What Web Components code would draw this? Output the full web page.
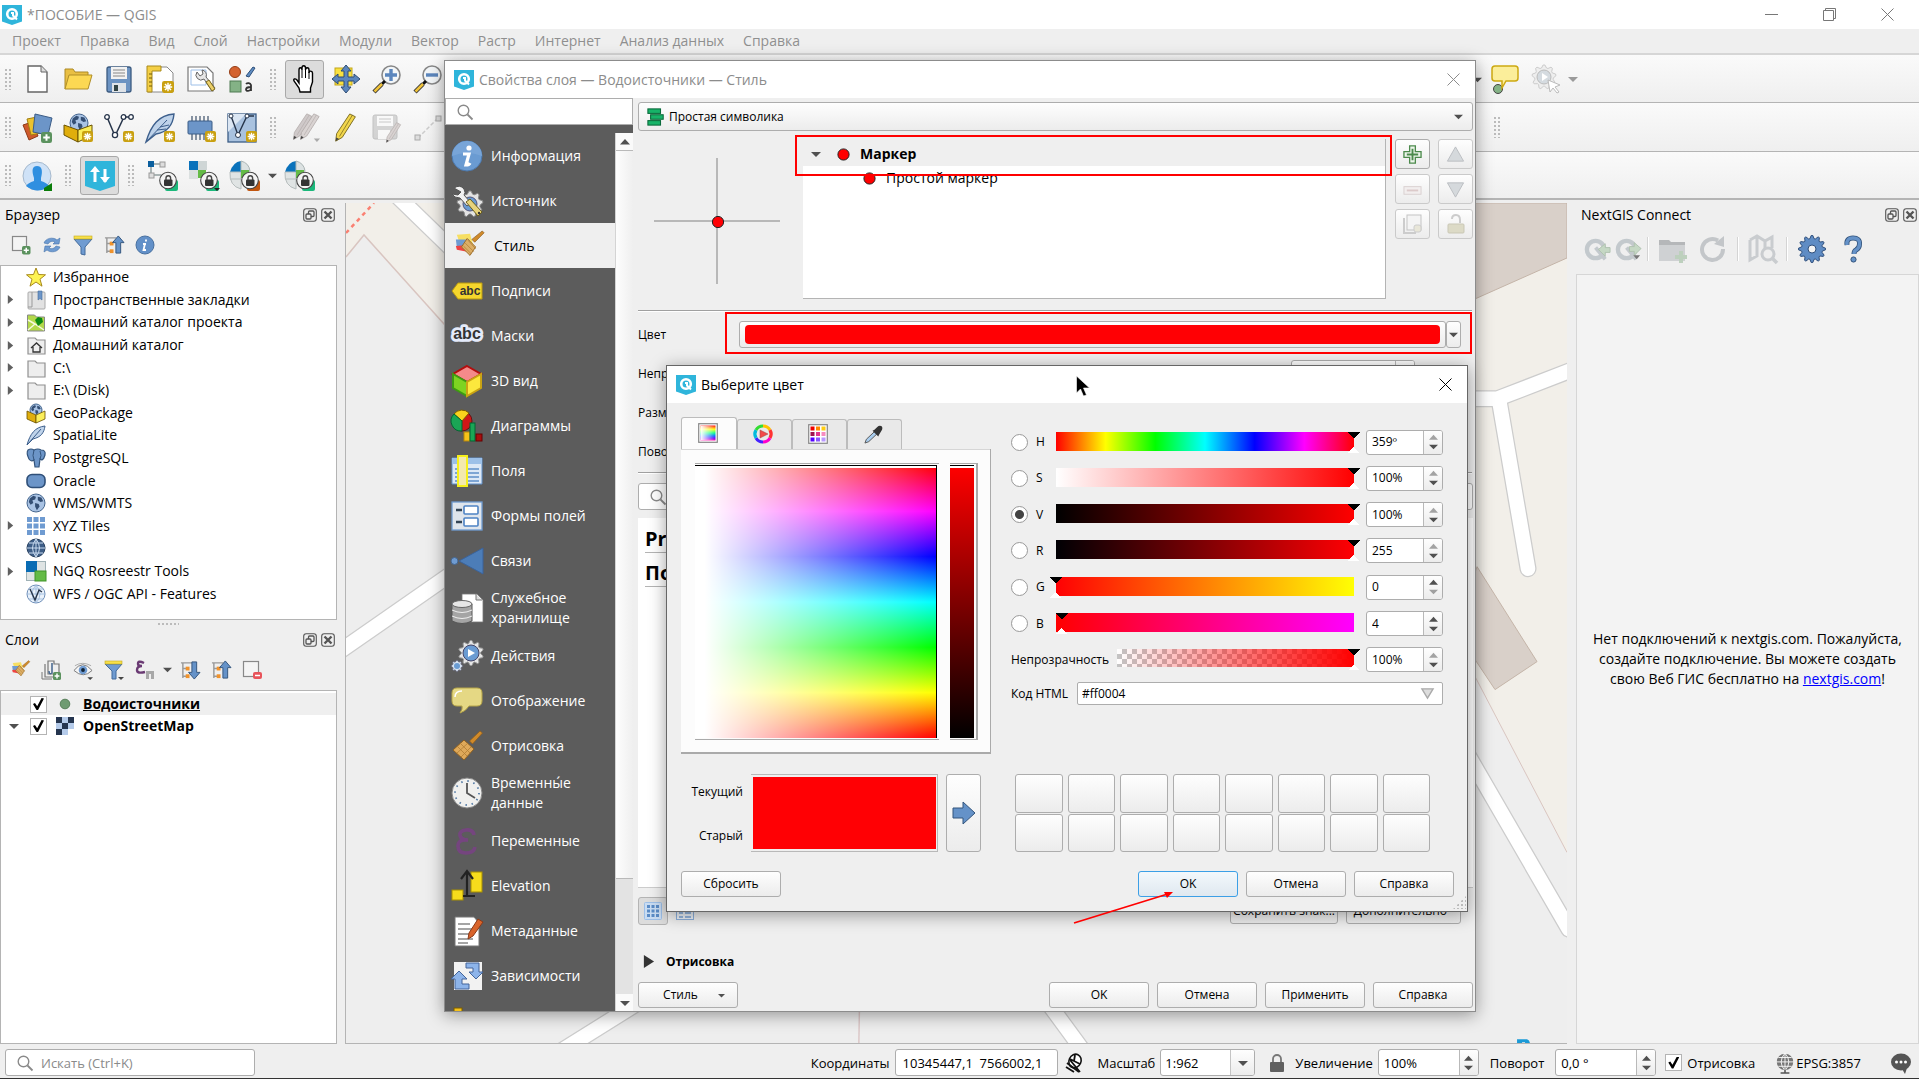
<!DOCTYPE html>
<html lang="ru">
<head>
<meta charset="utf-8">
<title>*ПОСОБИЕ — QGIS</title>
<style>
html,body{margin:0;height:100%;overflow:hidden}
body{font-family:"Open Sans","Noto Sans",sans-serif;font-size:14px;line-height:20px;color:#000;background:#efefef;
--line:#b4b4b4;--face:#efefef;--dim:#8c8c8c;--small:12px;--btn:linear-gradient(#fefefe,#ececec)}
</style>
</head>
<body>
<gis-app></gis-app>
<script>
const badge=(x,y,s=9)=>`<g transform="translate(${x} ${y}) scale(${s/10})"><rect width="10" height="10" rx="1.8" fill="#c9a010"/><path d="M5 1.5v7M1.5 5h7M2.5 2.5l5 5M7.500 2.500l-5 5" stroke="#fff" stroke-width="1.2"/></g>`;
const plusBadge=(x,y,s=9)=>`<g transform="translate(${x} ${y}) scale(${s/10})"><rect width="10" height="10" rx="2" fill="#5b925e"/><path d="M5 2v6M2 5h6" stroke="#fff" stroke-width="1.8"/></g>`;
const lockBadge=(c)=>`<rect x="17" y="19" width="13" height="11" rx="2" fill="${c}"/><circle cx="20" cy="19.500" r="8.300" fill="#f4f4f4" stroke="#444" stroke-width="1.100"/><rect x="16" y="18.500" width="8.500" height="6.500" rx="1" fill="#333"/><path d="M18 19v-2a2.300 2.300 0 0 1 4.600 0v2" fill="none" stroke="#444" stroke-width="1.400"/>`;
const globe=(cx,cy,r)=>`<circle cx="${cx}" cy="${cy}" r="${r}" fill="#a9c3e4" stroke="#44658e"/><path transform="translate(${cx-r} ${cy-r}) scale(${r/10})" d="M3 5l4-3 3 1-1 3-3 1 1 3-3 2-2-3zM12 3l4 1 2 4-3 1-3-2zM9 10l4 1 1 3-3 4-2-4z" fill="#344f74"/>`;
const gearD=(cx,cy,r,n)=>{let d='';for(let i=0;i<n*2;i++){const q=i%2?r*.78:r;for(const s of[-.22,.22]){const a=(i+s)*Math.PI/n;d+=(d?'L':'M')+(cx+q*Math.sin(a)).toFixed(1)+' '+(cy-q*Math.cos(a)).toFixed(1)}}return d+'z'};
const brush=`<path d="M3 5l14-1 4 14-13 2z" fill="#f7df63"/><path d="M2 10l14 0 2 6-15 2z" fill="#6f9bd1"/><path d="M2 17l12-1 4 8-15-3z" fill="#ef4343"/><path d="M30 1l2 2-10 10-3-3z" fill="#d08a2a" stroke="#8a5a1c" stroke-width=".7"/><path d="M14 9l9 9-6 9-9-9z" fill="#dcae66" stroke="#9a6b26"/><path d="M12 14l9 9M15 11l8 9M10 17l8 8" stroke="#b17e33" stroke-width=".8"/>`;
const tree=(c)=>`<path d="M1 3h12M3 3v16M3 9h5M3 17h5" stroke="#999" stroke-width="1.500" fill="none"/><rect x="6" y="7" width="4" height="4" fill="#f0922b"/><rect x="6" y="15" width="4" height="4" fill="#f0922b"/>${c}`;
const up='<path d="M15 1l6 7h-3.500v11h-5V8H9z" fill="#6592c8" stroke="#33547c"/>';
const down='<path d="M15 20l6-7h-3.500V2h-5v11H9z" fill="#6592c8" stroke="#33547c"/>';
const pencil=(a,b)=>`<path d="M20 1l6 3-14 22-7 4 1-8z" fill="${a}" stroke="${b}"/><path d="M23 2L9 25" stroke="${b}" stroke-width=".8"/><path d="M5 30l.5-4 3 1.500z" fill="#444"/>`;
const folder='<path d="M2 3h7l2 2h8v14H2z" fill="#eee" stroke="#909090" stroke-width="1.200"/>';
const ICONS={
logo:[20,'<path d="M0 0h20v16.500L10 20 0 16.500z" fill="#2fb5db"/><circle cx="10" cy="9" r="4.800" fill="none" stroke="#fff" stroke-width="2.600"/><path d="M9 8l2 0v2.500l4 4" stroke="#fff" stroke-width="2" fill="none"/>'],
page:[30,'<path d="M6 2h13l6 6v20H6z" fill="#fff" stroke="#666" stroke-width="1.400"/><path d="M19 2v6h6" fill="#ddd" stroke="#666"/>'],
folder:[30,'<path d="M2 25V5h8l2 3h13v5" fill="#e9bf43" stroke="#ad8a26"/><path d="M2 25L6 11h23l-4 14z" fill="#fcd853" stroke="#b08e28"/>'],
save:[30,'<rect x="3" y="3" width="24" height="25" rx="2" fill="#6c93c2" stroke="#3c5b80" stroke-width="1.300"/><rect x="7" y="3" width="16" height="12" fill="#f2f2f2"/><path d="M9 6h12M9 9h12M9 12h12" stroke="#888"/><rect x="8" y="19" width="14" height="9" fill="#dfe3e8"/><rect x="10" y="21" width="4" height="6" fill="#344"/>'],
layout:[30,'<path d="M3 3h19l6 6v19H3z" fill="#fff" stroke="#888"/><path d="M2 2h14v5H7v21H2z" fill="#f4cf45" stroke="#a98a1c"/><path d="M4 10h3M4 14h3M4 18h3M4 22h3" stroke="#6f5a0c"/>'+badge(17,17,12)],
layouts:[30,'<path d="M2 3h19l6 6v18H2z" fill="#fff" stroke="#777" stroke-width="1.200"/><path d="M5 6h15v15H5z" fill="none" stroke="#9dbfe8"/><path d="M11 8a5 5 0 0 0 7 7l8 12 3-3-9-11a5 5 0 0 0-4-7l1 4-3 2z" fill="#e6e6e6" stroke="#666"/><path d="M20 18l6 9 3-2-6-9z" fill="#ecd06a" stroke="#7c6a20"/>'],
style:[30,'<circle cx="8" cy="8" r="5.500" fill="#d4622f" stroke="#943c14"/><path d="M19 12l7-9 2 1-6 9z" fill="#5e8dc3" stroke="#2d4e78"/><rect x="3" y="17" width="11" height="11" fill="#84b286" stroke="#4f7b52"/><path d="M24 27V21a3 3 0 0 0-5-1M24 23c-3 0-5 .5-5 2.500s4 2 5-.5" fill="none" stroke="#333" stroke-width="1.800"/>'],
hand:[30,'<path d="M10 28l-1-4-5-7c-1-2 1-3 3-1l2 3V6c0-3 3-3 3 0V4c0-3 3.500-3 3.500 0v2c0-3 3.500-3 3.500 0v3c0-3 3.500-2 3.500 0v9l-2 6v4z" fill="#fff" stroke="#000" stroke-width="1.400"/><path d="M12 6v8M15.500 6v8M19 8v7" stroke="#000"/>'],
pan:[30,'<rect x="4" y="4" width="17" height="17" fill="#f9e13f" stroke="#c2a61b"/><path d="M15 1l5 6h-3v6h6v-3l6 5-6 5v-3h-6v6h3l-5 6-5-6h3v-6H7v3l-6-5 6-5v3h6V7h-3z" fill="#5b86bd" stroke="#2f4d74"/>'],
zin:[30,'<circle cx="19" cy="11" r="9" fill="#f3f6f8" stroke="#888" stroke-width="1.600"/><path d="M19 5v12M13 11h12" stroke="#5b86bd" stroke-width="3.400"/><path d="M13 17l-3 3" stroke="#111" stroke-width="3"/><path d="M10 20l-8 8" stroke="#333" stroke-width="4.500"/><path d="M10 20l-7.500 7.500" stroke="#efc23a" stroke-width="2.500"/>'],
zout:[30,'<circle cx="19" cy="11" r="9" fill="#f3f6f8" stroke="#888" stroke-width="1.600"/><path d="M13 11h12" stroke="#5b86bd" stroke-width="3.400"/><path d="M13 17l-3 3" stroke="#111" stroke-width="3"/><path d="M10 20l-8 8" stroke="#333" stroke-width="4.500"/><path d="M10 20l-7.500 7.500" stroke="#efc23a" stroke-width="2.500"/>'],
balloon:[30,'<circle cx="8" cy="25" r="4.500" fill="#84b286" stroke="#444"/><path d="M5 2h20q3 0 3 3v9q0 3-3 3h-9l-4 7v-7H5q-3 0-3-3V5q0-3 3-3z" fill="#fbee9a" stroke="#cda912" stroke-width="1.500"/>'],
action:[30,`<path d="${gearD(13,13,12,9)}" fill="#eee" stroke="#ccc"/><circle cx="13" cy="13" r="7" fill="#d5dbe0" stroke="#bbb"/><path d="M11 9l6 4-6 4z" fill="#fff"/><path d="M17 16l12 5-5 2 4 5-2 1-4-5-3 4z" fill="#fff" stroke="#bbb"/>`],
manager:[30,'<path d="M1 12l9-3 6 14-9 4z" fill="#cf5a2c" stroke="#8c3917"/><path d="M5 6l10-2 4 16-10 2z" fill="#ebc22f" stroke="#a17f10"/><path d="M13 1l17 4-4 17-15-3z" fill="#6c95c8" stroke="#3b5c86"/>'+plusBadge(19,19,11)],
geopkg:[30,globe(16,10,9)+'<path d="M1 12l14 5v12L1 22z" fill="#e0ae0c" stroke="#6a5200"/><path d="M15 17l14-5v10l-14 7z" fill="#fbee5a" stroke="#6a5200"/>'+badge(19,18,11)],
vline:[30,'<path d="M3 4l8 19L20 4h7" fill="none" stroke="#26344a" stroke-width="1.500"/><g fill="#fff" stroke="#26344a" stroke-width="1.300"><circle cx="3" cy="4" r="2.300"/><circle cx="11" cy="22" r="2.600"/><circle cx="19.500" cy="4" r="2.300"/><circle cx="27" cy="4" r="2.300"/></g>'+badge(19,18,11)],
feather:[30,'<path d="M1 29C6 12 14 2 29 1c-1 10-5 18-18 20z" fill="#bfd3ea" stroke="#3d5f8c" stroke-width="1.400"/><path d="M1 29L22 7M12 17l9-1M15 14l9-2" stroke="#3d5f8c" fill="none"/>'+badge(19,18,11)],
chip:[30,'<path d="M6 3v24M10 3v24M14 3v24M18 3v24M22 3v24" stroke="#4b5d74" stroke-width="1.300"/><rect x="2" y="8" width="24" height="13" rx="1" fill="#6c95c8" stroke="#3b5c86"/>'+badge(19,18,11)],
vlayer:[30,'<rect x="1" y="1" width="28" height="28" fill="#a9c2df" stroke="#3b5c86" stroke-width="1.300"/><path d="M1 1h18L1 19z" fill="#dbe6f3"/><path d="M4 3l7 19L20 3h7" fill="none" stroke="#26344a" stroke-width="1.400"/><circle cx="11" cy="22" r="2.500" fill="#fff" stroke="#26344a"/><circle cx="4" cy="3" r="2" fill="#fff" stroke="#26344a"/><circle cx="20" cy="3" r="2" fill="#fff" stroke="#26344a"/>'+badge(19,18,11)],
editsg:[34,'<g transform="translate(-1 0)">'+pencil('#cfc9c9','#b5aead')+'</g><g transform="translate(7 0)">'+pencil('#d9d3d2','#b5aead')+'</g><path d="M27 29h7l-3.500 4z" fill="#aaa"/>'],
pencil:[32,pencil('#f2d64c','#77681d')],
saveg:[30,'<g opacity=".35"><rect x="1" y="2" width="24" height="24" rx="2" fill="#999" stroke="#666"/><rect x="5" y="3" width="16" height="10" fill="#fff"/><path d="M7 6h12M7 9h12" stroke="#777"/><rect x="6" y="17" width="12" height="9" fill="#fff"/></g><g transform="translate(11 9) scale(.68)">'+pencil('#d9d3d2','#b5aead')+'</g>'],
lineg:[30,'<path d="M5 25L25 5" stroke="#ccc" stroke-width="1.500" stroke-dasharray="4 2"/><rect x="2" y="22" width="5" height="5" fill="#ddd" stroke="#aaa"/><rect x="23" y="3" width="5" height="5" fill="#ddd" stroke="#aaa"/>'],
user:[30,'<circle cx="15" cy="15" r="14" fill="#cfe2f7" stroke="#a6b9cd"/><path d="M4 25q2-3 8-5v-3q-4-12 3-12t4 12v3q6 2 8 5-11 9-23 0z" fill="#2f8fe0"/><path d="M22 27l8-5v8h-8z" fill="#0a7d0a"/>'],
ngsync:[30,'<path d="M0 0h30v25L15 30 0 25z" fill="#2fb5db"/><path d="M10 21V8M20 8v13" stroke="#fff" stroke-width="3"/><path d="M5 11l5-6 5 6zM15 16l5 6 5-6z" fill="#fff"/>'],
ros1:[30,'<path d="M3 3h13M3 3v11h10" stroke="#aab4b4" stroke-width="2" fill="none"/><rect x="0" y="0" width="6" height="6" fill="#0b5f9e"/><rect x="12" y="1" width="5" height="5" fill="#ddd" stroke="#999"/><rect x="1" y="12" width="5" height="5" fill="#ddd" stroke="#999"/>'+lockBadge('#1bb87b')],
ros2:[30,'<rect width="9" height="9" fill="#0a72bb"/><rect x="9" width="9" height="9" fill="#cfd6d6"/><rect y="9" width="9" height="9" fill="#dbe0e0"/><rect x="9" y="9" width="8" height="8" fill="#64bb46"/>'+lockBadge('#1bb87b')+'<path d="M25 27h6l-3 3z" fill="#222"/>'],
ros3:[30,'<path d="M0 11Q3 1 11 0v11z" fill="#0a72bb"/><path d="M11 0q8 2 9 10h-9z" fill="#dce2e2" stroke="#aab4b4"/><path d="M0 11h11v17Q-1 25 0 11z" fill="#e0e4e4" stroke="#b5bcbc"/><path d="M0 18h11" stroke="#b5bcbc"/><rect x="11" y="9" width="8" height="8" fill="#64bb46"/>'+lockBadge('#c2560f')],
ros4:[30,'<path d="M0 11Q3 1 11 0v11z" fill="#0a72bb"/><path d="M11 0q8 2 9 10h-9z" fill="#dce2e2" stroke="#aab4b4"/><path d="M0 11h11v17Q-1 25 0 11z" fill="#e0e4e4" stroke="#b5bcbc"/><path d="M0 18h11" stroke="#b5bcbc"/><rect x="11" y="9" width="8" height="8" fill="#64bb46"/>'+lockBadge('#1bb87b')],
arrow:[10,'<path d="M0 3h10L5 8z" fill="#505050"/>'],
arrowg:[10,'<path d="M0 3h10L5 8z" fill="#9a9a9a"/>'],
addbox:[20,'<rect x="1.500" y="1.500" width="14" height="14" fill="#f4f4f4" stroke="#888" stroke-width="1.200"/>'+plusBadge(11,11,8.5)],
refresh:[20,'<path d="M2 8a8 7 0 0 1 13-3l3-2-1 6h-6l2-2a5 5 0 0 0-7 2z" fill="#6f9bd1" stroke="#4774ab" stroke-width=".6"/><path d="M18 12a8 7 0 0 1-13 3l-3 2 1-6h6l-2 2a5 5 0 0 0 7-2z" fill="#6f9bd1" stroke="#4774ab" stroke-width=".6"/>'],
filter:[20,'<path d="M1 4h18l-7 8v8l-4-1v-7z" fill="#6f9bd1" stroke="#436b9c"/><rect x="1" y="1" width="18" height="3" fill="#f7e04a" stroke="#c4a91c" stroke-width=".6"/>'],
filterd:[20,'<path d="M1 4h17l-6 7v8H8v-8z" fill="#6f9bd1" stroke="#436b9c"/><rect x="1" y="1" width="17" height="3" fill="#f7e04a" stroke="#c4a91c" stroke-width=".6"/><path d="M14 17h6l-3 3z" fill="#444"/>'],
collapse:[21,tree(up)],expand:[21,tree(down)],
info:[20,'<circle cx="10" cy="10" r="9" fill="#6290c8" stroke="#48709f"/><path d="M11 4.500v2M10 8.500l-1.500 6.500h2.500M8 9h3" stroke="#fff" stroke-width="1.800" fill="none"/>'],
dup:[20,'<path d="M6 1h6v3h5v10H6zM3 4v13h11" fill="none" stroke="#777" stroke-width="1.200"/><path d="M0 12v7h10" stroke="#777" fill="none"/><path d="M10 3v10q-3 2-3-2" stroke="#44658e" fill="none" stroke-width="1.500"/>'+plusBadge(11,12,8)],
eye:[21,'<path d="M1 11q9-12 19 0-9 9-19 0z" fill="#f5f5f5" stroke="#777"/><path d="M2 6q8-5 17 0" stroke="#aaa" fill="none"/><circle cx="10.500" cy="10.500" r="4.500" fill="#6f9bd1"/><circle cx="10.500" cy="10.500" r="2" fill="#123"/><path d="M15 18h6l-3 3z" fill="#444"/>'],
eps:[20,'<path d="M9 3Q3 0 3 4q0 2 4 2-5 0-5 4t8 2" fill="none" stroke="#6a3a73" stroke-width="2.400"/><path d="M11 11h8v8h-3v-5h-2v5h-3z" fill="#a8a8a8"/>'],
removebox:[20,'<rect x="1.500" y="1.500" width="15" height="15" fill="#f4f4f4" stroke="#888" stroke-width="1.200"/><rect x="11" y="12" width="9" height="7" rx="2" fill="#e8535a"/><path d="M13 15.500h5" stroke="#fff" stroke-width="1.500"/>'],
dockfloat:[14,'<rect x=".7" y=".7" width="12.600" height="12.600" rx="2.500" fill="none" stroke="#555" stroke-width="1.100"/><rect x="5.500" y="3" width="5.500" height="5.500" rx="1" fill="none" stroke="#555" stroke-width="1.300"/><rect x="3" y="6" width="5" height="5" rx="1" fill="#efefef" stroke="#555" stroke-width="1.300"/>'],
dockclose:[14,'<rect x=".7" y=".7" width="12.600" height="12.600" rx="2.500" fill="none" stroke="#555" stroke-width="1.100"/><path d="M3.500 3.500l7 7M10.500 3.500l-7 7" stroke="#555" stroke-width="2.400"/>'],
star:[20,'<path d="M10 1l2.500 6.500 7 .3-5.500 4.400 2 7L10 15l-6 4.200 2-7L.5 7.800l7-.3z" fill="#fdf353" stroke="#a8891b"/>'],
bookmark:[20,'<rect x="2" y="2" width="17" height="17" rx="1" fill="#e2e2e2" stroke="#aaa"/><path d="M6 2v15H2" fill="none" stroke="#999"/><path d="M12 1h4v9l-2-1.500L12 10z" fill="#6c95c8" stroke="#436b9c" stroke-width=".6"/>'],
mapfolder:[20,'<path d="M1.500 3h7l2 2h8v14h-17z" fill="#b3d84a" stroke="#888"/><path d="M2 8l7 4 9 6M9 12l-7 6" stroke="#f4f9dd" stroke-width="1.500" fill="none"/><path d="M9 8l3-3 4 1 1 4-5 4z" fill="#0c8a14"/>'],
home:[20,folder+'<path d="M5 13l5.500-5 5.500 5M7 12v5h7v-5" fill="none" stroke="#333" stroke-width="1.300"/>'],
dir:[20,folder],
box:[20,globe(10,7,6)+'<path d="M1 8l9 4v8l-9-4z" fill="#e0ae0c" stroke="#6a5200" stroke-width=".8"/><path d="M10 12l9-4v8l-9 4z" fill="#fbee5a" stroke="#6a5200" stroke-width=".8"/>'],
feathers:[20,'<path d="M1 20C4 9 9 2 19 1c-1 7-4 11-12 13z" fill="#bfd3ea" stroke="#3d5f8c"/><path d="M1 20L15 4" stroke="#3d5f8c"/>'],
pg:[20,'<path d="M2 2q3-2 6 0 4-2 7 0 5 0 4 5-1 4-3 5l-2-1-1 8h-4l-1-7q-3 2-5-1-3-6-1-9z" fill="#6c95c8" stroke="#33547c" stroke-width="1.200"/><path d="M8 2q-2 6 0 10M14 3q2 5 0 8" fill="none" stroke="#33547c"/>'],
ora:[20,'<rect x="1" y="3.500" width="18" height="13" rx="5" fill="#6c95c8" stroke="#2f4f78" stroke-width="1.600"/>'],
wms:[20,globe(10,10,9)],
xyz:[20,'<path d="M1 1h5v5H1zM7.500 1h5v5h-5zM14 1h5v5h-5zM1 7.500h5v5H1zM7.500 7.500h5v5h-5zM14 7.500h5v5h-5zM1 14h5v5H1zM7.500 14h5v5h-5zM14 14h5v5h-5z" fill="#6f9bd1"/>'],
wcs:[20,'<circle cx="10" cy="10" r="9" fill="#3d5d86" stroke="#27405f"/><path d="M1 10h18M3 5h14M3 15h14M10 1v18M10 1Q3 10 10 19M10 1q7 9 0 18" stroke="#c9dbf0" fill="none"/>'],
ngq:[20,'<rect width="20" height="20" fill="#9fb1b5"/><rect width="11" height="11" fill="#0a6cb4"/><rect x="11" y="1" width="8" height="9" fill="#dfe4e4"/><rect x="1" y="11" width="8" height="8" fill="#dfe4e4"/><rect x="9" y="10" width="11" height="10" fill="#64bb46" stroke="#3f9328"/>'],
wfs:[20,'<circle cx="10" cy="10" r="9" fill="#eaf2fb" stroke="#6f8fb8"/><path d="M1 10h18M10 1v18M3 5h14M3 15h14M10 1Q2 10 10 19M10 1q8 9 0 18" stroke="#9bb8dc" fill="none" stroke-width=".8"/><path d="M4 5l5 11 4-10 3 2" stroke="#26344a" fill="none" stroke-width="1.400"/>'],
dotgreen:[18,'<circle cx="9" cy="9" r="4.800" fill="#6f9b72" stroke="#587f5a"/>'],
raster:[18,'<rect width="18" height="18" fill="#fff"/><path d="M0 0h6v6H0zM12 0h6v6h-6zM6 6h6v6H6zM0 12h6v6H0z" fill="#25354f"/><path d="M6 0h6v6H6zM12 6h6v6h-6zM6 12h6v6H6zM0 6h6v6H0z" fill="#b5cbea"/>'],
search:[16,'<circle cx="6.500" cy="6.500" r="5.300" fill="none" stroke="#8a8a8a" stroke-width="1.400"/><path d="M10.500 10.500l5 5" stroke="#8a8a8a" stroke-width="1.800"/>'],
mouse:[20,'<ellipse cx="11" cy="8" rx="6" ry="7" transform="rotate(25 11 8)" fill="#fff" stroke="#111" stroke-width="1.600"/><path d="M6 6l10 5M11 2l-1 6M3 10l12 9M6 7l10 12M2 14l8 5" stroke="#111" stroke-width="1.800"/>'],
lock:[18,'<path d="M5 9V5a4 4 0 0 1 8 0v4" fill="none" stroke="#777" stroke-width="1.800"/><rect x="2" y="8" width="14" height="10" rx="1" fill="#606060"/>'],
crs:[20,'<circle cx="10" cy="9" r="7.500" fill="#777"/><path d="M2 9h16M4 5h12M4 13h12M10 1v16M10 1q-7 8 0 16M10 1q7 8 0 16" stroke="#fff" fill="none" stroke-width=".8"/><path d="M10 16v3M6 19h8" stroke="#555" stroke-width="1.400"/>'],
msg:[22,'<ellipse cx="11" cy="10" rx="10" ry="8.500" fill="#555"/><path d="M12 17l3 5 2-6z" fill="#555"/><circle cx="6.500" cy="10" r="1.500" fill="#fff"/><circle cx="11" cy="10" r="1.500" fill="#fff"/><circle cx="15.500" cy="10" r="1.500" fill="#fff"/>'],
ngq1:[28,'<circle cx="12" cy="14" r="9" fill="none" stroke="#c3c9cd" stroke-width="4.500"/><path d="M12 12l10 12" stroke="#c3c9cd" stroke-width="4"/><path d="M15 14l7-6v4h5v5h-5v4z" fill="#c5d8c4" stroke="#b0c2b0"/>'],
ngq2:[28,'<circle cx="12" cy="14" r="9" fill="none" stroke="#c3c9cd" stroke-width="4.500"/><path d="M12 12l10 12" stroke="#c3c9cd" stroke-width="4"/><path d="M27 13l-7-6v4h-5v5h5v4z" fill="#c5d8c4" stroke="#b0c2b0"/><path d="M19 20h7l-3.500 4z" fill="#777"/>'],
ngfolder:[30,'<path d="M1 6h10l2 2h14v4H1z" fill="#b5b7b9"/><path d="M1 11h26v16H1z" fill="#cfd1d3"/><path d="M23 17v12M17 23h12" stroke="#bdd0bd" stroke-width="4"/>'],
ngrefresh:[28,'<path d="M23 14a10.500 10.500 0 1 1-5-8.500" fill="none" stroke="#c3c6c9" stroke-width="4"/><path d="M14 9l10-8v11z" fill="#c3c6c9"/>'],
ngmap:[30,'<path d="M2 6l7-4 8 5 7-4v11M2 6v20l7-4V3M17 7v8" fill="none" stroke="#c9cccf" stroke-width="3"/><circle cx="20" cy="20" r="6" fill="none" stroke="#c9cccf" stroke-width="3"/><path d="M24 24l5 5" stroke="#c9cccf" stroke-width="3.500"/>'],
gear:[28,`<path d="${gearD(14,14,13.5,12)}" fill="#5f8cc4" stroke="#2f4f7c"/><circle cx="14" cy="14" r="4" fill="#f4f4f4" stroke="#2f4f7c"/>`],
help:[28,'<path d="M8 10q-1-7 6-7t6.500 6q0 4-3.500 6-2 1-2 4" fill="none" stroke="#33547c" stroke-width="5"/><path d="M8 10q-1-7 6-7t6.500 6q0 4-3.500 6-2 1-2 4" fill="none" stroke="#6592c8" stroke-width="3.400"/><circle cx="14.500" cy="24.500" r="2.600" fill="#6592c8" stroke="#33547c"/>'],
nInfo:[32,'<circle cx="16" cy="16" r="15" fill="#6a9bd2" stroke="#4d79ad"/><path d="M1 16a15 15 0 0 1 30 0q-15-6-30 0z" fill="#78a5d8"/><circle cx="18" cy="8" r="2.600" fill="#fff"/><path d="M12 14h6l-3 11q3 0 4-2" fill="none" stroke="#fff" stroke-width="3.200"/>'],
nSource:[32,`<path d="${gearD(19,19,13,9)}" fill="#e3e3e3" stroke="#888"/><circle cx="19" cy="19" r="7" fill="#6a9bd2" stroke="#557"/><path d="M3 3q6-4 10 1 2 4 0 6l7 8-4 3-7-8q-6 0-8-4l6 1 3-3z" fill="#f2f2f2" stroke="#555"/><path d="M15 17l4-3 12 13-4 4z" fill="#e8d37b" stroke="#6c5f1c"/><circle cx="28" cy="28" r="1.200" fill="#333"/>`],
nStyle:[34,brush],
nLabels:[32,'<path d="M1 16l6-8h24v16H7z" fill="#f5d62c" stroke="#b99a10"/>','abc','x="19" y="20"'],
nMasks:[34,'','abc','x="17" y="20" style="font-size:17px;stroke:#e4eafa;stroke-width:6px;stroke-linejoin:round;paint-order:stroke"'],
n3d:[32,'<path d="M16 1l14 8-14 8L2 9z" fill="#f48a8a" stroke="#b30e0e" stroke-width="2"/><path d="M2 9l14 8v14L2 23z" fill="#7ed321" stroke="#3d9a12" stroke-width="2"/><path d="M30 9l-14 8v14l14-8z" fill="#fce83d" stroke="#c9a313" stroke-width="2"/>'],
nDiag:[32,'<circle cx="11" cy="11" r="10" fill="#d01717" stroke="#611"/><path d="M11 11L3 4a10 10 0 0 1 15-1z" fill="#fbd21c" stroke="#7a5c00"/><path d="M11 11L3 4a10 10 0 0 0 8 17z" fill="#1ba555" stroke="#063"/><rect x="13" y="22" width="6" height="9" fill="#f6c21a" stroke="#b8860b"/><rect x="19" y="13" width="5" height="18" fill="#1ba555" stroke="#063"/><rect x="25" y="24" width="6" height="7" fill="#a80e0e" stroke="#600"/>'],
nFields:[32,'<path d="M1 3h30v26H1z" fill="#dce8f6" stroke="#5e8fc9"/><path d="M1 3h30v6H1z" fill="#9cc0e8"/><path d="M4 14h24M4 18h24M4 22h24M4 26h24M14 12v15" stroke="#5e8fc9" stroke-width="1.500"/><rect x="7" y="1" width="9" height="30" fill="#f3e9ad" stroke="#f6ef1c" stroke-width="2"/>'],
nForms:[32,'<rect x="1" y="2" width="30" height="28" fill="#dfe5ec" stroke="#6f9bd1" stroke-width="1.300"/><rect x="13" y="6" width="14" height="8" rx="1" fill="#fff" stroke="#4d82c4" stroke-width="1.600"/><rect x="13" y="18" width="14" height="8" rx="1" fill="#fff" stroke="#4d82c4" stroke-width="1.600"/><path d="M5 10h6M5 22h6" stroke="#345" stroke-width="2.500"/>'],
nJoins:[32,'<circle cx="3.500" cy="16" r="3.500" fill="#6f9bd1" stroke="#44658e"/><path d="M8 16L32 3v26z" fill="#4c7db8" stroke="#3b639a"/>'],
nStore:[32,'<path d="M11 2h15l6 6v22H11z" fill="#fff" stroke="#777" stroke-width=".8"/><path d="M25 2v6h6" fill="#ddd" stroke="#777"/><path d="M1 12v17q10 5 20 0V12z" fill="#a5a5a5" stroke="#555"/><ellipse cx="11" cy="12" rx="10" ry="3.500" fill="#e6e6e6" stroke="#666"/><path d="M1 18q10 5 20 0M1 24q10 5 20 0" fill="none" stroke="#eee"/>'],
nAct:[32,`<path d="${gearD(20,13,12.5,10)}" fill="#e6e6e6" stroke="#999"/><circle cx="20" cy="13" r="8" fill="#6a9bd2" stroke="#446"/><path d="M17 9l7 4-7 4z" fill="#fff"/><path d="${gearD(6,26,5.8,8)}" fill="#d9e5f4" stroke="#667"/><circle cx="6" cy="26" r="3" fill="#6a9bd2"/>`],
nDisp:[32,'<path d="M6 3h20q5 0 5 5v8q0 5-5 5h-8q-3 5-9 7 3-4 2-7H6q-5 0-5-5V8q0-5 5-5z" fill="#e5d884" stroke="#b6a548"/><path d="M4 12q0-6 7-6" stroke="#fff" fill="none" stroke-width="1.500"/>'],
nRend:[32,'<path d="M29 1l2.500 2-10 11-3-3z" fill="#d08a2a" stroke="#8a5a1c" stroke-width=".7"/><path d="M13 10l10 9-10 11-11-10z" fill="#dfa95a" stroke="#8f601f"/><path d="M9 13l10 10M6 16l10 10M17 13L6 23M20 17L10 27" stroke="#b17e33" stroke-width=".8"/>'],
nTime:[32,'<circle cx="16" cy="16" r="15" fill="#f0f0ee" stroke="#888"/><circle cx="16" cy="16" r="12" fill="none" stroke="#557ba5" stroke-width="1.800" stroke-dasharray="1.500 4.780"/><path d="M16 6v10l8 5" stroke="#555" stroke-width="1.800" fill="none"/>'],
nVar:[32,'<path d="M23 10Q22 4 15 5q-7 1-6 5.500t8 4.500q-10-1-10 6t8 7q8 0 9-6" fill="none" stroke="#75457f" stroke-width="3.600"/>'],
nElev:[32,'<rect x="20" y="2" width="11" height="20" fill="#f6dc1c" stroke="#a88f00"/><rect x="1" y="20" width="11" height="10" fill="#f6dc1c" stroke="#a88f00"/><path d="M16 2v24M10 9l6-8 6 8M12 26h12" fill="none" stroke="#222" stroke-width="2.200"/>'],
nMeta:[32,'<path d="M4 2h19l5 6v23H4z" fill="#fff" stroke="#777"/><path d="M7 9h12M7 14h14M7 19h15M7 24h15M7 28h10" stroke="#888" stroke-width="1.300"/><path d="M27 4l5 3-10 14-5 3 1-6z" fill="#d9642b" stroke="#8c3917"/>'],
nDep:[32,'<rect x="3" y="2" width="28" height="28" fill="#f2f2f2"/><path d="M15 3h13v9h4l-7 7-7-7h4V8h-7z" fill="#8db4ea" stroke="#44659a"/><path d="M18 29H4V19H0l8-8 8 8h-5v5h7z" fill="#8db4ea" stroke="#44659a"/>'],
nLast:[32,'<rect x="3" y="3" width="8" height="9" fill="#f6c21a" stroke="#7b5c00"/>'],
stack:[20,'<g fill="#17b368" stroke="#0b6b3c" stroke-width="1.200"><rect x="1" y="1" width="14" height="5"/><rect x="4" y="7.500" width="14" height="5"/><rect x="1" y="14" width="14" height="5"/></g>'],
plus:[20,'<path d="M7 1h6v6h6v6h-6v6H7v-6H1V7h6z" fill="#eef6ec" stroke="#4c8a4c" stroke-width="1.400"/><path d="M10 4v12M4 10h12" stroke="#4c8a4c" stroke-width="2"/>'],
minus:[20,'<rect x="1" y="7" width="18" height="8" fill="#f2eeee" stroke="#d9d0d0"/><path d="M4 11h12" stroke="#dccaca" stroke-width="2"/>'],
copy:[20,'<path d="M1 4v15h12" stroke="#ccc" fill="none" stroke-width="2"/><rect x="4" y="1" width="14" height="15" fill="#f4f4f4" stroke="#c3c3c3"/><rect x="11" y="11" width="7" height="7" rx="2" fill="#e8e6d8" stroke="#ccc"/>'],
unlock:[20,'<path d="M6 5q0-4 4-4t4 5v3" fill="none" stroke="#ccc" stroke-width="2"/><rect x="2" y="10" width="16" height="9" rx="1" fill="#dcdac6" stroke="#c9c7b5"/>'],
triup:[20,'<path d="M10 2l8.500 15h-17z" fill="#d5d9dc" stroke="#b9bdc1"/>'],
tridn:[20,'<path d="M10 18L18.500 3h-17z" fill="#d5d9dc" stroke="#b9bdc1"/>'],
dd:[18,'<rect x="1" y="1" width="16" height="12" fill="#ededed" stroke="#667" stroke-width="1.400"/>'],
reddot:[13,'<circle cx="6.500" cy="6.500" r="5.600" fill="#f00" stroke="#222"/>'],
grid:[18,'<rect x=".5" y=".5" width="17" height="17" rx="1" fill="#c9dcf2" stroke="#9dbfe8"/><path d="M3 3h3v3H3zM7.500 3h3v3h-3zM12 3h3v3h-3zM3 7.500h3v3H3zM7.500 7.500h3v3h-3zM12 7.500h3v3h-3zM3 12h3v3H3zM7.500 12h3v3h-3zM12 12h3v3h-3z" fill="#5a8bc6"/>'],
list:[18,'<rect x=".5" y=".5" width="17" height="17" fill="#eef3f9" stroke="#8eb1dc"/><path d="M3 4h4M9 4h6M3 8h4M9 8h6M3 11h4M9 11h6M3 15h4M9 15h6" stroke="#7ba5d8" stroke-width="1.500"/>'],
cramp:[20,'<defs><linearGradient id="a" x2="0" y2="1"><stop stop-color="red"/><stop offset=".25" stop-color="#ff0"/><stop offset=".5" stop-color="#0f8"/><stop offset=".7" stop-color="#06f"/><stop offset=".85" stop-color="#60f"/><stop offset="1" stop-color="#f0a"/></linearGradient><linearGradient id="b"><stop stop-color="#fff"/><stop offset="1" stop-color="#fff" stop-opacity="0"/></linearGradient></defs><rect x=".7" y=".7" width="18.600" height="18.600" fill="#fff" stroke="#888" stroke-width="1.200"/><path d="M2.500 2.500h15v15h-15z" fill="url(#a)"/><path d="M2.500 2.500h15v15h-15z" fill="url(#b)"/>'],
cwheel:[20,'<g fill="none" stroke-width="3.200"><path d="M10 2a8 8 0 0 1 7 4" stroke="#ffc400"/><path d="M17 6a8 8 0 0 1 0 8" stroke="#f33"/><path d="M17 14a8 8 0 0 1-7 4" stroke="#f0c"/><path d="M10 18a8 8 0 0 1-7-4" stroke="#42f"/><path d="M3 14a8 8 0 0 1 0-8" stroke="#0bd"/><path d="M3 6a8 8 0 0 1 7-4" stroke="#3d3"/></g><path d="M7 6l8 4-8 4z" fill="#f34a4a" stroke="#944" stroke-width=".5"/>'],
cpal:[20,'<rect x=".7" y=".7" width="18.600" height="18.600" fill="#fff" stroke="#888" stroke-width="1.200"/><path d="M2.500 2.500h4v4h-4z" fill="#e00"/><path d="M8 2.500h4v4H8z" fill="#f80"/><path d="M13.500 2.500h4v4h-4z" fill="#fc1"/><path d="M2.500 8h4v4h-4z" fill="#a0134f"/><path d="M8 8h4v4H8z" fill="#e2358b"/><path d="M13.500 8h4v4h-4z" fill="#f78cc0"/><path d="M2.500 13.500h4v4h-4z" fill="#50f"/><path d="M8 13.500h4v4H8z" fill="#85f"/><path d="M13.500 13.500h4v4h-4z" fill="#b9f"/>'],
cpick:[20,'<path d="M1 19l1.500-4L11 7l2.500 2.500L5 17.500z" fill="#a9cdee" stroke="#555"/><path d="M9 6l6 6 1-2 3-5q1-3-1-4t-4 1l-3 3z" fill="#333"/>'],
next:[24,'<path d="M1 7h10V1l12 11-12 11v-6H1z" fill="#6592c8" stroke="#33547c"/>'],
dropg:[14,'<path d="M1 2h12L7 12z" fill="#ddd" stroke="#aaa" stroke-width="1.500"/>'],
close:[13,'<path d="M.5.5l12 12M12.500.5l-12 12" stroke="currentColor"/>'],
min:[13,'<path d="M0 6.500h13" stroke="currentColor"/>'],
restore:[13,'<path d="M.5 2.500h10v10H.5zM2.500 2.500v-2h10v10h-2" fill="none" stroke="currentColor"/>'],
right:[10,'<path d="M2 0l6 5-6 5z" fill="#606060"/>'],
rightbig:[14,'<path d="M2 0l11 7-11 7z" fill="#333"/>'],
upa:[10,'<path d="M0 7.500h10L5 2z" fill="#505050"/>']
};
const define=(tag,css,html)=>customElements.define(tag,class extends HTMLElement{
 connectedCallback(){if(this.shadowRoot)return;
  const r=this.attachShadow({mode:'open'}),t=document.createElement('template');
  t.innerHTML=`<style>*{box-sizing:border-box}button,input,select{font:inherit;color:inherit;margin:0}${css}</style>`+(typeof html==='function'?html(this):html);
  r.append(t.content.cloneNode(true));}
});
const A=(e,n,d='')=>e.getAttribute(n)??d;

define('gis-icon',':host{display:inline-flex;flex:none}svg{display:block;overflow:visible}text{font:bold 12px "Liberation Sans",sans-serif}',e=>{
 const[s,b,t,at]=ICONS[A(e,'name')],z=A(e,'size',s);
 return `<svg width="${z}" height="${z}" viewBox="0 0 ${s} ${s}" aria-hidden="true">${b}${t?`<text ${at} text-anchor="middle" fill="#333">${t}</text>`:''}</svg>`});

define('tool-button',`:host{display:flex;flex:none;width:41px;height:41px;align-items:center;justify-content:center}
:host([small]){width:31px;height:31px}:host([narrow]){width:14px}
button{display:flex;align-items:center;justify-content:center;width:39px;height:39px;padding:0;border:1px solid transparent;border-radius:3px;background:none}
:host([small]) button{width:100%;height:100%}:host([narrow]) button{width:14px;border:0}
:host([on]) button{background:#dcdcdc;border-color:#a9a9a9}`,
 e=>`<button aria-label="${A(e,'label',A(e,'icon'))}"><gis-icon name="${A(e,'icon')}" size="${A(e,'size','30')}"></gis-icon></button>`);

define('bar-handle',`:host{display:flex;flex:none;width:22px;justify-content:center}:host([first]){width:16px}
i{width:6px;height:21px;background:radial-gradient(circle at 1px 1px,#bbb 1px,transparent 1px) 0 0/4px 4px}`,'<i></i>');

define('tool-row',`:host{display:flex;align-items:center;height:49px;padding-top:1px;background:linear-gradient(#fafafa,#efefef);border-bottom:1px solid var(--line);overflow:hidden}`,'<slot></slot>');

define('push-button',`:host{display:flex;width:100px;height:26px}:host([fill]){width:auto;height:auto}
button{flex:1;display:flex;align-items:center;justify-content:center;padding:0 4px;border:1px solid #adadad;border-radius:3px;background:var(--btn);font-size:var(--small);line-height:16px;white-space:nowrap;min-width:0}
:host([primary]) button{border-color:#3c9fe6;background:linear-gradient(#f3f8fc,#dfe8f0)}:host([off]) button{border-color:#cacaca}`,
 e=>`<button${e.hasAttribute('off')?' disabled':''} aria-label="${A(e,'label')||e.textContent.trim()||'Цвет'}"><slot></slot></button>`);

define('spin-box',`:host{display:flex;height:25px;border:1px solid #adadad;border-radius:3px;background:#fff;overflow:hidden}
input{flex:1;width:0;min-width:0;border:0;outline:0;background:none;padding:0 0 0 5px}
span{flex:none;width:19px;border-left:1px solid #b9b9b9;background:var(--btn);display:flex;flex-direction:column;justify-content:center;align-items:center}
button{border:0;background:none;padding:0;height:9px;display:flex}.lo{opacity:.5}`,
 e=>`<input type="text" aria-label="${A(e,'label')}" value="${A(e,'value')}"><span><button class="${A(e,'lim')=='max'?'lo':''}" aria-label="Больше"><gis-icon name="upa" size="9"></gis-icon></button><button class="${A(e,'lim')=='min'?'lo':''}" aria-label="Меньше"><gis-icon name="arrow" size="9"></gis-icon></button></span>`);

define('check-box',`:host{display:inline-flex;align-items:center;gap:5px;flex:none}
input{appearance:none;width:17px;height:17px;background:#fff;border:1px solid #b4b4b4;display:grid;place-items:center}
input:checked::after{content:"";width:11px;height:12px;background:#000;clip-path:polygon(0 50%,18% 42%,38% 68%,78% 0,100% 4%,46% 100%,32% 100%)}`,
 e=>`<input type="checkbox" id="c" checked aria-label="${A(e,'label')}"><label for="c"><slot></slot></label>`);

define('search-box',`:host{display:flex;align-items:center;background:#fff;border:1px solid #adadad;border-radius:3px;height:27px;padding-left:11px;gap:8px}
input{flex:1;min-width:0;border:0;outline:0;background:none;padding:0}input::placeholder{color:#8a8a8a}`,
 e=>`<gis-icon name="search" size="16"></gis-icon><input type="search" aria-label="Поиск" placeholder="${A(e,'hint')}">`);

define('dock-panel',`:host{display:flex;flex-direction:column;min-height:0}
header{display:flex;align-items:center;gap:4px;height:24px;padding:0 2px 0 5px}header b{flex:1;font-weight:400}
nav{display:flex;align-items:center;height:38px;padding:0 0 3px 5px}
button{border:0;background:none;padding:0;display:flex}`,
 e=>`<header><b>${A(e,'title')}</b><button aria-label="Открепить"><gis-icon name="dockfloat" size="14"></gis-icon></button><button aria-label="Закрыть"><gis-icon name="dockclose" size="14"></gis-icon></button></header><nav part="tools"><slot name="tools"></slot></nav><slot></slot>`);

define('tree-item',`:host{display:flex;flex:1;align-items:center;padding-left:5px;white-space:nowrap;min-height:0}
i{width:20px;display:flex}gis-icon{margin-right:7px}`,
 e=>`<i>${e.hasAttribute('open')?'<gis-icon name="right" size="9"></gis-icon>':''}</i><gis-icon name="${A(e,'icon')}" size="20"></gis-icon><slot></slot>`);

define('layer-item',`:host{display:flex;align-items:center;height:22px;padding-left:8px;font-weight:700;font-size:14px}:host([sel]){background:#efefef}
i{width:21px;display:flex}gis-icon.t{margin:0 9px 0 4px}:host([sel]) span{text-decoration:underline}`,
 e=>`<i>${e.hasAttribute('open')?'<gis-icon name="arrow" size="10"></gis-icon>':''}</i><check-box label="${e.textContent}"></check-box><gis-icon class="t" name="${A(e,'icon')}" size="18"></gis-icon><span><slot></slot></span>`);

define('nav-item',`:host{display:flex;align-items:center;height:45px;flex:none;padding-left:6px;color:#fff;line-height:20px}
:host([tall]){height:50px}:host([sel]){background:#efefef;color:#000;padding-left:9px}
gis-icon{margin-right:8px}button{border:0;background:none;padding:0;text-align:left;width:110px;line-height:20px}`,
 e=>`<gis-icon name="${A(e,'icon')}" size="32"></gis-icon><button><slot></slot></button>`);

define('app-window',`:host{display:flex;flex-direction:column;position:absolute;background:var(--face);border:1px solid #8c8c8c;box-shadow:0 3px 16px rgba(0,0,0,.38)}
header{flex:none;display:flex;align-items:center;height:37px;background:#fff;padding:0 15px 0 9px;gap:5px;color:var(--title,#8c8c8c)}
b{flex:1;font-weight:400}button{border:0;background:none;padding:0;display:flex;color:inherit}`,
 e=>`<header><gis-icon name="logo" size="20"></gis-icon><b>${A(e,'title')}</b><button aria-label="Закрыть"><gis-icon name="close" size="13"></gis-icon></button></header><slot></slot>`);

define('channel-row',`:host{display:flex;align-items:center;font-size:var(--small)}
input[type=radio]{appearance:none;flex:none;width:17px;height:17px;border:1px solid #999;border-radius:50%;background:#fff}
input[type=radio]:checked{background:radial-gradient(circle,#444 0 4px,#fff 5px)}
label{width:14px;margin-left:8px}label.w{width:100px;margin:0}
input[type=range]{appearance:none;flex:1;min-width:0;height:21px;margin:0 6px 0 0;background:var(--g) 6px 0/calc(100% - 12px) 19px no-repeat;outline:0}
input[type=range]::-webkit-slider-thumb{appearance:none;width:12px;height:21px;background:conic-gradient(from -45deg at 50% 100%,#000 90deg,#0000 0) 0 0/12px 6px no-repeat,conic-gradient(from 135deg at 50% 0,#fff 90deg,#0000 0) 0 15px/12px 6px no-repeat}
.chk{flex:1;display:grid;height:21px;margin-right:6px}.chk>*{grid-area:1/1}.chk i{margin:0 6px 3px;background:linear-gradient(90deg,#fff0,#f00),repeating-conic-gradient(#c4c4c4 0 25%,#fff 0 50%) 0 0/10px 10px}.chk input{margin:0!important;width:100%;background:none!important}
spin-box{width:77px}`,
 e=>{const n=A(e,'name'),op=n.length>1,v=A(e,'pos');
 const g={H:'red,#ff0,lime,cyan,blue,#f0f,red',S:'#fff,red',V:'#000,red',R:'#000004,#ff0004',G:'#ff0004,#ffff04',B:'red,#f0f'}[n]||'';
 return (op?`<label class="w" for="s">${n}</label><span class="chk"><i></i><input type="range" id="s" value="${v}"></span>`:
 `<input type="radio" id="r"${n=='V'?' checked':''}><label for="r">${n}</label><input type="range" aria-label="${n}" value="${v}" style="--g:linear-gradient(90deg,${g})">`)+
 `<spin-box label="${n}" value="${A(e,'val')}" lim="${A(e,'lim')}"></spin-box>`});

define('map-canvas',`:host{display:block;min-width:0;overflow:hidden;background:#eee;border:solid var(--line);border-width:0 0 1px 1px}svg{width:100%;height:100%;display:block}`,
`<svg viewBox="346 203 1222 841" preserveAspectRatio="xMinYMin slice"><path d="M346 203h500v560L445 325l-81-90-18 22z" fill="#f2efe9"/><path d="M346 257l18-22 81 90" fill="none" stroke="#d9c5c0" stroke-width="1.500"/>
<path d="M346 233l28-30" stroke="#fa8072" stroke-width="2.500" stroke-dasharray="4 4"/>
<path d="M1300 203h268v650L1476 677l-176-200z" fill="#f2efe9"/><path d="M1476 677l92 176" stroke="#d9c5c0"/>
<path d="M1300 203h268v55l-92 41-176 60zM1478 567l60 95-42 28-40-60z" fill="#d9d0c9" stroke="#c4b4a8"/>
<path d="M860 1000l-1 60" stroke="#dcc8c8" stroke-width="1.500"/>
<g fill="none" stroke-linecap="round" stroke-linejoin="round"><path d="M393 192l70 68M335 655l115-80M540 1065l120-75M1035 985l55 75M1470 399h28l75-29M1500 400l29 169M1460 740l110 190" stroke="#ccc" stroke-width="17"/><path d="M393 192l70 68M335 655l115-80M540 1065l120-75M1035 985l55 75M1470 399h28l75-29M1500 400l29 169M1460 740l110 190" stroke="#fff" stroke-width="14.500"/></g>
<path d="M1518 1040h10q3 1 3 5h-5v-2h-3v2h-5z" fill="#1a9ad7"/></svg>`);

define('status-bar',`:host{display:flex;align-items:center;height:35px;border-bottom:1px solid #333;padding:3px 7px 0 5px;flex:none;font-size:13px}
search-box{width:250px;font-size:13px}.sp{flex:1}.f{display:flex;height:27px;background:#fff;border:1px solid #adadad;border-radius:3px;overflow:hidden}
.f input{border:0;background:none;padding:0 0 0 7px;width:161px;outline:0}
select{appearance:none;border:0;background:none;width:69px;padding:0 0 0 4px;outline:0}.f i{width:24px;background:var(--btn);border-left:1px solid #c4c4c4;display:grid;place-items:center}
label{margin-right:5px}spin-box{height:27px;width:101px}`,
`<search-box hint="Искать (Ctrl+K)"></search-box><span class="sp"></span>
<label for="xy">Координаты</label><span class="f"><input id="xy" value="10345447,1  7566002,1"></span><gis-icon name="mouse" size="20" style="margin:0 14px 0 6px"></gis-icon>
<label for="sc">Масштаб</label><span class="f"><select id="sc"><option>1:962</option></select><i><gis-icon name="arrow" size="10"></gis-icon></i></span>
<gis-icon name="lock" size="18" style="margin:0 9px 0 13px"></gis-icon><label>Увеличение</label><spin-box label="Увеличение" value="100%"></spin-box>
<label style="margin:0 11px">Поворот</label><spin-box label="Поворот" value="0,0 °"></spin-box>
<check-box style="margin:0 19px 0 9px">Отрисовка</check-box><gis-icon name="crs" size="22"></gis-icon><span>EPSG:3857</span><gis-icon name="msg" size="22" style="margin-left:29px"></gis-icon>`);

define('style-dialog',`:host{display:flex;flex:1;min-height:0;font-size:var(--small);line-height:16px}
aside{width:188px;background:#5c5c5c;display:flex;flex-direction:column;flex:none;min-height:0}
.body{display:flex;flex:1;min-height:0;margin-top:8px}
nav{flex:1;display:flex;flex-direction:column;overflow:hidden;font-size:14px}
.scroll{width:18px;display:flex;flex-direction:column;background:#e3e3e3;border-left:1px solid #d4d4d4}
.scroll u{height:17px;background:#fafafa;display:grid;place-items:center}.scroll s{flex:1;background:linear-gradient(90deg,#fdfdfd,#efefef);border:solid #b9b9b9;border-width:1px 0;margin-bottom:115px}
main{flex:1;min-width:0;display:flex;flex-direction:column;padding:4px 2px 3px 5px}
.combo{display:flex;align-items:center;height:29px;border:1px solid #adadad;border-radius:3px;background:var(--btn);padding:0 9px 0 8px;flex:none}
.combo select{appearance:none;border:0;background:none;flex:1;padding:0 0 0 4px;outline:0}
.sym{display:flex;height:160px;margin-top:8px;flex:none}
.prev{width:165px;display:grid;place-items:center;padding:3px 7px 0 0}
.tree{flex:1;background:#fff;border:solid var(--line);border-width:0 1px 1px 0;margin-right:9px;font-size:14px}
.tree div{display:flex;align-items:center;height:24px}.tree .h{background:#efefef;height:27px;padding:3px 0 0 8px;font-weight:700}.tree .h gis-icon+gis-icon{margin:0 10px 0 16px}
.tree .k{padding-left:60px;gap:10px}
.btns{display:grid;grid-template:repeat(3,30px)/35px 35px;gap:5px 8px}
hr{border:0;border-top:1px solid #a0a0a0;border-bottom:1px solid #fff;margin:11px 1px 9px 0;height:2px;flex:none}
.row{display:flex;align-items:center;height:27px;margin-bottom:12px;padding-right:12px;flex:none}.row label{width:101px}
.color{flex:1;height:27px;border:1px solid #adadad;border-radius:3px;background:var(--btn);padding:3px 5px;display:flex}.color i{flex:1;background:#ff0004;border-radius:4px}
.cd{width:15px;height:27px;padding:0;border:1px solid #adadad;border-radius:3px;background:var(--btn);display:grid;place-items:center}
.row input{flex:1;margin-right:5px;accent-color:#999}
.row spin-box{width:124px;height:27px}
.list{flex:1;background:#fff;margin-top:8px;padding:8px 6px 0 7px;font-size:20px;line-height:26px;font-weight:700;border-bottom:1px solid #ccc}
.list h3{margin:0 0 7px;font-size:inherit;line-height:26px;border-bottom:1px solid #b4b4b4}
.foot{display:flex;align-items:center;gap:8px;margin-top:9px;height:28px;padding-right:12px;flex:none}.foot push-button{width:108px}.foot push-button:last-child{width:115px}
.foot .g{width:30px;height:28px;border:1px solid #b4b4b4;background:#dcdcdc;border-radius:3px;display:grid;place-items:center;padding:0}
.foot .n{border:0;background:none;padding:0;display:flex}
.exp{display:flex;align-items:center;gap:11px;height:57px;padding:16px 0 0 4px;font-weight:700}
.act{display:flex;gap:8px;flex:none}.sp{flex:1}`,
`<aside><search-box style="border-radius:0"></search-box><div class="body"><nav>
<nav-item icon="nInfo">Информация</nav-item><nav-item icon="nSource">Источник</nav-item><nav-item icon="nStyle" sel>Стиль</nav-item><nav-item icon="nLabels">Подписи</nav-item><nav-item icon="nMasks">Маски</nav-item><nav-item icon="n3d">3D вид</nav-item><nav-item icon="nDiag">Диаграммы</nav-item><nav-item icon="nFields">Поля</nav-item><nav-item icon="nForms">Формы полей</nav-item><nav-item icon="nJoins">Связи</nav-item><nav-item icon="nStore" tall>Служебное хранилище</nav-item><nav-item icon="nAct">Действия</nav-item><nav-item icon="nDisp">Отображение</nav-item><nav-item icon="nRend">Отрисовка</nav-item><nav-item icon="nTime" tall>Временны́е данные</nav-item><nav-item icon="nVar">Переменные</nav-item><nav-item icon="nElev">Elevation</nav-item><nav-item icon="nMeta">Метаданные</nav-item><nav-item icon="nDep">Зависимости</nav-item><nav-item icon="nLast"></nav-item>
</nav><div class="scroll"><u><gis-icon name="upa" size="10"></gis-icon></u><s></s><u><gis-icon name="arrow" size="10"></gis-icon></u></div></div></aside>
<main><div class="combo"><gis-icon name="stack" size="18"></gis-icon><select aria-label="Символика"><option>Простая символика</option></select><gis-icon name="arrow" size="9"></gis-icon></div>
<div class="sym"><div class="prev"><svg width="126" height="126" viewBox="0 0 126 126"><path d="M63 0v126M0 63h126" stroke="#b8b8b8" stroke-width="2"/><circle cx="64" cy="64" r="5.600" fill="#ff0004" stroke="#222"/></svg></div>
<div class="tree"><div class="h"><gis-icon name="arrow" size="10"></gis-icon><gis-icon name="reddot" size="13"></gis-icon>Маркер</div><div class="k"><gis-icon name="reddot" size="13"></gis-icon>Простой маркер</div></div>
<div class="btns"><push-button fill label="Добавить"><gis-icon name="plus" size="19"></gis-icon></push-button><push-button fill off label="Выше"><gis-icon name="triup" size="19"></gis-icon></push-button><push-button fill off label="Удалить"><gis-icon name="minus" size="19"></gis-icon></push-button><push-button fill off label="Ниже"><gis-icon name="tridn" size="19"></gis-icon></push-button><push-button fill off label="Копировать"><gis-icon name="copy" size="20"></gis-icon></push-button><push-button fill off label="Закрепить"><gis-icon name="unlock" size="20"></gis-icon></push-button></div></div>
<hr><div class="row"><label for="col">Цвет</label><button class="color" id="col"><i style="height:19px"></i></button><button class="cd" aria-label="Меню цвета"><gis-icon name="arrow" size="9"></gis-icon></button></div>
<div class="row"><label for="op">Непрозрачность</label><input id="op" type="range" value="100"><spin-box label="Непрозрачность" value="100,0 %"></spin-box><gis-icon name="dd" size="18" style="margin:0 10px 0 18px"></gis-icon></div>
<div class="row"><label>Размер</label></div><div class="row" style="margin-bottom:0"><label>Поворот</label></div>
<hr style="margin-top:7px"><search-box></search-box><div class="list"><h3>Project Styles</h3><h3>По умолчанию</h3></div>
<div class="foot"><button class="g" aria-label="Значки"><gis-icon name="grid" size="18"></gis-icon></button><button class="n" aria-label="Список"><gis-icon name="list" size="18"></gis-icon></button><span class="sp"></span><push-button>Сохранить знак...</push-button><push-button>Дополнительно&nbsp;&nbsp;</push-button></div>
<div class="exp"><gis-icon name="rightbig" size="13"></gis-icon><span>Отрисовка</span></div>
<div class="act"><push-button label="Стиль"><span style="margin:0 20px 0 12px">Стиль</span><gis-icon name="arrow" size="7"></gis-icon></push-button><span class="sp"></span><push-button>OK</push-button><push-button>Отмена</push-button><push-button>Применить</push-button><push-button>Справка</push-button></div></main>`);

define('color-dialog',`:host{display:flex;flex-direction:column;flex:1;padding:14px 13px 13px 14px;font-size:var(--small);line-height:16px}
.top{display:flex;gap:20px}.left{width:310px;flex:none}
.tabs{display:flex;align-items:flex-end;height:32px}.tabs button{width:55px;height:30px;padding:0 3px 1px 0;border:1px solid #bcbcbc;border-bottom:0;border-radius:3px 3px 0 0;background:#e9e9e9;display:grid;place-items:center;margin-right:0}
.tabs .on{width:56px;height:32px;background:#fcfcfc}
.pane{display:flex;gap:11px;height:305px;background:#fcfcfc;border:solid #aaa;border-width:0 1px 2px 0;padding:14px 12px 12px 14px;box-shadow:inset 0 1px #d6d6d6}
.sq{flex:1;border:solid #aaa;border-width:1px 0;padding:1px 0 1px}.sq i,.v i{display:block;height:100%;border-top:1px solid #000;box-shadow:inset 0 2px #fff}
.sq i{margin-right:2px;border-right:1px solid #000;background:linear-gradient(90deg,#fff 4%,#fff0),linear-gradient(red,#f0f,blue,cyan,lime,#ff0,red)}
.v{width:28px;border:solid #aaa;border-width:1px 2px 1px 0;padding:1px 2px 1px 0}.v i{background:linear-gradient(red,#000)}
.right{flex:1;display:flex;flex-direction:column;padding:7px 11px 0 0}
.ch{display:grid;grid-template-rows:repeat(7,1fr);height:254px}
.html{display:flex;align-items:center;margin-top:4px;gap:9px}.html span{flex:1;display:flex;align-items:center;height:23px;border:1px solid #adadad;border-radius:2px;background:#fff;padding-right:8px}
.html input{flex:1;min-width:0;border:0;outline:0;background:none;padding:0 0 0 4px}
.mid{display:flex;margin-top:20px;height:78px}.lb{width:62px;display:flex;flex-direction:column;justify-content:space-between;padding:10px 0 8px;text-align:right;margin-right:8px}
.cur{width:187px;border:solid #b9b9b9;border-width:1px 1px 1px 0;padding:2px 1px 2px 2px;display:flex}.cur i{flex:1;background:#ff0004}
.mid>push-button{width:35px;margin:0 34px 0 8px}
.sw{flex:1;display:grid;grid-template:1fr 1fr/repeat(8,1fr);gap:1px 5px;margin-right:24px}
.act{display:flex;gap:8px;margin-top:19px}.sp{flex:1}`,
`<div class="top"><div class="left"><div class="tabs"><button class="on" aria-label="Градиент"><gis-icon name="cramp" size="20"></gis-icon></button><button aria-label="Круг"><gis-icon name="cwheel" size="20"></gis-icon></button><button aria-label="Палитра"><gis-icon name="cpal" size="20"></gis-icon></button><button aria-label="Пипетка"><gis-icon name="cpick" size="19"></gis-icon></button></div>
<div class="pane"><div class="sq"><i></i></div><div class="v"><i></i></div></div></div>
<div class="right"><div class="ch"><channel-row name="H" pos="100" val="359º" lim="max"></channel-row><channel-row name="S" pos="100" val="100%" lim="max"></channel-row><channel-row name="V" pos="100" val="100%" lim="max"></channel-row><channel-row name="R" pos="100" val="255" lim="max"></channel-row><channel-row name="G" pos="0" val="0" lim="min"></channel-row><channel-row name="B" pos="2" val="4"></channel-row><channel-row name="Непрозрачность" pos="100" val="100%" lim="max"></channel-row></div>
<div class="html"><label for="hx">Код HTML</label><span><input id="hx" value="#ff0004"><gis-icon name="dropg" size="13"></gis-icon></span></div></div></div>
<div class="mid"><div class="lb"><span>Текущий</span><span>Старый</span></div><div class="cur"><i></i></div><push-button fill label="Добавить цвет"><gis-icon name="next" size="24"></gis-icon></push-button><div class="sw">${'<push-button fill></push-button>'.repeat(16)}</div></div>
<div class="act"><push-button>Сбросить</push-button><span class="sp"></span><push-button primary>OK</push-button><push-button>Отмена</push-button><push-button>Справка</push-button></div>`);

define('guide-marks',`:host{position:absolute;inset:0;pointer-events:none}i{position:absolute;border:2px solid #f00}svg{position:absolute}
.grip{border:0;width:13px;height:13px;background:radial-gradient(circle at 1px 1px,#bbb 1px,transparent 1px) 0 0/4px 4px;clip-path:polygon(100% 0,100% 100%,0 100%)}`,
`<i style="left:795px;top:135px;width:597px;height:41px"></i><i style="left:725px;top:312px;width:747px;height:42px"></i><i class="grip" style="left:1453px;top:896px"></i>
<svg style="left:1070px;top:885px" width="110" height="42"><path d="M4 38L101 8" stroke="#f00" stroke-width="1.800"/><path d="M103 7l-9 0 3 6z" fill="#f00"/></svg>
<svg style="left:1075px;top:375px" width="16" height="24" viewBox="0 0 16 24"><path d="M1.500 1v17l4-4 3 7 3-1-3-7h6z" fill="#000" stroke="#fff" stroke-width=".6"/></svg>`);

define('gis-app',`:host{display:flex;flex-direction:column;height:100vh;position:relative;overflow:hidden}
.title{display:flex;align-items:center;height:29px;background:#fff;color:var(--dim);padding:0 25px 0 2px;gap:5px;flex:none}.title b{flex:1;font-weight:400}
.title button{border:0;background:none;color:#777;padding:0;margin-left:40px;display:flex}
.menu{display:flex;align-items:center;height:26px;gap:19px;padding-left:12px;color:#8f8f8f;border-bottom:2px solid #d6d6d6;flex:none;line-height:24px}
.menu button{border:0;background:none;padding:0}
.sp{flex:0 0 1022px}.work{flex:1;display:flex;min-height:0;padding-top:3px}
.docks{width:337px;display:flex;flex-direction:column;min-height:0}
.docks dock-panel:first-child{flex:0 0 417px}.docks dock-panel:last-child{flex:1}
.box{flex:1;background:#fff;border:1px solid var(--line);display:flex;flex-direction:column;min-height:0}
.browser{padding-bottom:14px;white-space:nowrap}
.grip{height:8px;display:grid;place-items:center}.grip i{width:21px;height:2px;background:repeating-linear-gradient(90deg,#bbb 0 2px,transparent 2px 4px)}
.vs{width:8px}map-canvas{flex:1}
.ng{width:343px;margin-left:9px}.ng .area{flex:1;background:#f3f3f3;border:1px solid #d6d6d6;display:flex;align-items:center;justify-content:center;text-align:center}
.ng::part(tools){height:47px;padding:0 0 3px 1px}.ng hr{border:0;width:2px;height:24px;background:#fff;border-left:1px solid #d4d4d4;margin:0 3px}
.area p{margin:0;width:330px}a{color:#00f}
.last{border-bottom-width:2px}`,
`<div class="title"><gis-icon name="logo" size="20"></gis-icon><b>*ПОСОБИЕ — QGIS</b><button aria-label="Свернуть"><gis-icon name="min" size="13"></gis-icon></button><button aria-label="Развернуть"><gis-icon name="restore" size="13"></gis-icon></button><button aria-label="Закрыть"><gis-icon name="close" size="13"></gis-icon></button></div>
<nav class="menu">${['Проект','Правка','Вид','Слой','Настройки','Модули','Вектор','Растр','Интернет','Анализ данных','Справка'].map(t=>`<button>${t}</button>`).join('')}</nav>
<tool-row style="height:48px"><bar-handle first></bar-handle>${['page','folder','save','layout','layouts','style'].map(n=>`<tool-button icon="${n}"></tool-button>`).join('')}<bar-handle></bar-handle><tool-button icon="hand" on></tool-button><tool-button icon="pan"></tool-button><tool-button icon="zin"></tool-button><tool-button icon="zout"></tool-button><span class="sp"></span><tool-button narrow icon="arrow" size="9"></tool-button><tool-button icon="balloon"></tool-button><tool-button icon="action"></tool-button><tool-button narrow icon="arrowg" size="10"></tool-button></tool-row>
<tool-row><bar-handle first></bar-handle>${['manager','geopkg','vline','feather','chip','vlayer'].map(n=>`<tool-button icon="${n}"></tool-button>`).join('')}<bar-handle></bar-handle><tool-button icon="editsg"></tool-button><tool-button icon="pencil"></tool-button><tool-button icon="saveg"></tool-button><tool-button icon="lineg"></tool-button><span class="sp"></span><bar-handle style="margin-left:16px"></bar-handle></tool-row>
<tool-row class="last" style="height:48px"><bar-handle first></bar-handle><tool-button icon="user"></tool-button><bar-handle></bar-handle><tool-button icon="ngsync" on></tool-button><bar-handle></bar-handle><tool-button icon="ros1"></tool-button><tool-button icon="ros2"></tool-button><tool-button icon="ros3"></tool-button><tool-button narrow icon="arrow" size="9"></tool-button><tool-button icon="ros4"></tool-button></tool-row>
<div class="work"><div class="docks">
<dock-panel title="Браузер">${['addbox','refresh','filter','collapse','info'].map(n=>`<tool-button slot="tools" small size="20" icon="${n}"></tool-button>`).join('')}
<div class="box browser"><tree-item icon="star">Избранное</tree-item><tree-item open icon="bookmark">Пространственные закладки</tree-item><tree-item open icon="mapfolder">Домашний каталог проекта</tree-item><tree-item open icon="home">Домашний каталог</tree-item><tree-item open icon="dir">C:\\</tree-item><tree-item open icon="dir">E:\\ (Disk)</tree-item><tree-item icon="box">GeoPackage</tree-item><tree-item icon="feathers">SpatiaLite</tree-item><tree-item icon="pg">PostgreSQL</tree-item><tree-item icon="ora">Oracle</tree-item><tree-item icon="wms">WMS/WMTS</tree-item><tree-item open icon="xyz">XYZ Tiles</tree-item><tree-item icon="wcs">WCS</tree-item><tree-item open icon="ngq">NGQ Rosreestr Tools</tree-item><tree-item icon="wfs">WFS / OGC API - Features</tree-item></div></dock-panel>
<div class="grip"><i></i></div>
<dock-panel title="Слои">${['nStyle','dup','eye','filterd','eps'].map(n=>`<tool-button slot="tools" small size="20" icon="${n}"></tool-button>`).join('')}<tool-button slot="tools" narrow icon="arrow" size="9"></tool-button>${['expand','collapse','removebox'].map(n=>`<tool-button slot="tools" small size="20" icon="${n}"></tool-button>`).join('')}
<div class="box" style="padding-top:2px"><layer-item sel icon="dotgreen">Водоисточники</layer-item><layer-item open icon="raster">OpenStreetMap</layer-item></div></dock-panel>
</div><div class="vs"></div><map-canvas></map-canvas>
<dock-panel class="ng" title="NextGIS Connect"><tool-button slot="tools" small size="27" icon="ngq1" style="margin-left:5px"></tool-button><tool-button slot="tools" small size="27" icon="ngq2"></tool-button><hr slot="tools"><tool-button slot="tools" icon="ngfolder"></tool-button><tool-button slot="tools" icon="ngrefresh" size="28"></tool-button><hr slot="tools"><tool-button slot="tools" icon="ngmap"></tool-button><hr slot="tools"><tool-button slot="tools" icon="gear" size="28"></tool-button><tool-button slot="tools" icon="help" size="28"></tool-button>
<div class="area"><p>Нет подключений к nextgis.com. Пожалуйста, создайте подключение. Вы можете создать свою Веб ГИС бесплатно на <a href="#">nextgis.com</a>!</p></div></dock-panel></div>
<status-bar></status-bar>
<app-window title="Свойства слоя — Водоисточники — Стиль" style="left:444px;top:60px;width:1032px;height:952px"><style-dialog></style-dialog></app-window>
<app-window title="Выберите цвет" style="left:666px;top:365px;width:802px;height:547px;--title:#000;border-color:#666"><color-dialog></color-dialog></app-window>
<guide-marks></guide-marks>`);
</script>
</body>
</html>
